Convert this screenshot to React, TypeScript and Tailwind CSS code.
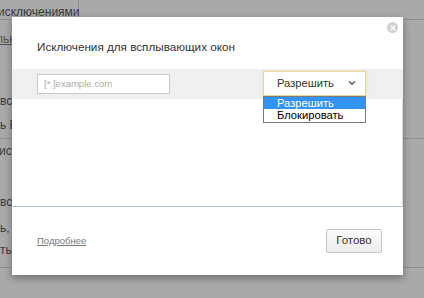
import { ChevronDown, X } from "lucide-react"

const Backdrop = () => {
    return (
        <div className="h-full w-full bg-[#a9a9a9] text-[12px] text-[#3c3c3c] overflow-hidden">
            <div className="flex h-[20px] border-b border-[#8f8f8f]">
                <div className="w-[81px] border-r border-[#8f8f8f] pt-[3px] -ml-[2px] whitespace-nowrap">исключениями</div>
            </div>
            <div className="h-[28px] pt-[10px] underline text-[#555] whitespace-nowrap -ml-[4px]">льные</div>
            <div className="h-[44px]" />
            <div className="h-[24px] whitespace-nowrap">всплывающие окна</div>
            <div className="h-[22px] whitespace-nowrap">ь Есть</div>
            <div className="h-[55px] border-t border-[#8f8f8f] pt-[3px] whitespace-nowrap -ml-[1px]">исключения</div>
            <div className="h-[26px] whitespace-nowrap">всё</div>
            <div className="h-[22px] whitespace-nowrap">ь, если</div>
            <div className="h-[26px] whitespace-nowrap">ть</div>
            <div className="border-t border-[#8f8f8f]" />
        </div>
    )
}

export default function App() {
    return (
        <div className="relative w-[424px] h-[298px] overflow-hidden" style={{ fontFamily: '"Liberation Sans", Arial, sans-serif' }}>
            <Backdrop />

            <div className="absolute left-[12px] top-[17px] w-[391px] h-[258px] bg-white flex flex-col shadow-[0_3px_8px_rgba(0,0,0,0.35)]">
                <div className="absolute right-[5px] top-[5px] size-[11px] rounded-full bg-[#cfcfcf] flex items-center justify-center">
                    <X className="size-[8px] text-white" strokeWidth={4} />
                </div>

                <div className="h-[52px] pl-[25px] pt-[21px] text-[11.7px] text-[#333]">
                    Исключения для всплывающих окон
                </div>

                <div className="relative h-[30px] bg-[#efefef] flex items-center justify-between pl-[25px] pr-[37px]">
                    <div className="w-[133px] h-[20px] bg-white border border-[#c9c9c9] flex items-center pl-[6px] text-[9.5px] text-[#aaa]">
                        [*.]example.com
                    </div>
                    <div className="relative w-[103px] h-[25px] bg-white border border-[#ead797] shadow-[0_0_2px_rgba(230,200,100,0.6)] flex items-center justify-between pl-[13px] pr-[8px] text-[11.2px] text-[#333] -mt-[2px]">
                        <span>Разрешить</span>
                        <ChevronDown className="size-[10px] text-[#555]" strokeWidth={3} />
                        <div className="absolute left-[-1px] top-[24px] w-[103px] bg-white border border-[#7a7a7a] text-[11.2px] leading-[12.5px]">
                            <div className="h-[12.5px] bg-[#3393f3] text-white pl-[13px]">Разрешить</div>
                            <div className="h-[12.5px] text-black pl-[13px]">Блокировать</div>
                        </div>
                    </div>
                </div>

                <div className="h-[108px] border-b border-r border-[#a9c7cb] border-r-[#d5d5d5]" />

                <div className="flex-1 flex items-center justify-between pl-[25px] pr-[21px]">
                    <a className="text-[9.5px] text-[#777] underline">Подробнее</a>
                    <button className="w-[56px] h-[24px] rounded-[2px] border border-[#c6c6c6] bg-gradient-to-b from-[#fbfbfb] to-[#ececec] text-[11.5px] text-[#333]">
                        Готово
                    </button>
                </div>
            </div>
        </div>
    )
}
